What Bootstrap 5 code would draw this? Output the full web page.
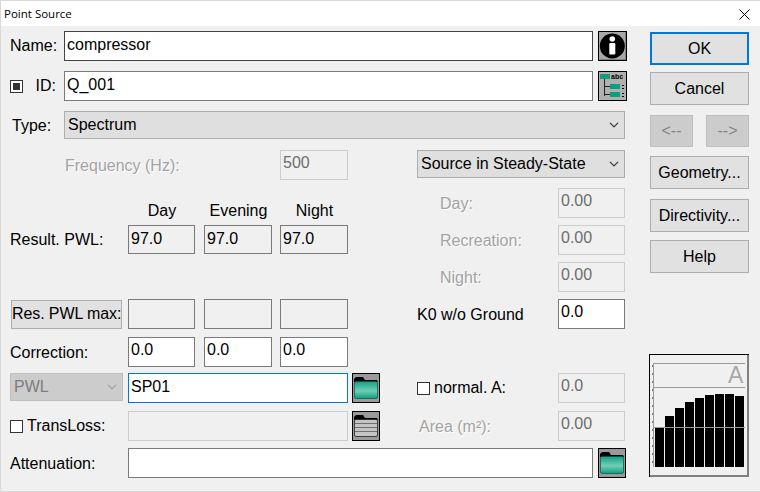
<!DOCTYPE html>
<html lang="en">
<head>
<meta charset="utf-8">
<title>Point Source</title>
<link rel="stylesheet" href="https://cdn.jsdelivr.net/npm/bootstrap@5.3.0/dist/css/bootstrap.min.css">
<style>
html,body{height:492px;overflow:hidden}
body{background:#f0f0f0;font-family:"Liberation Sans",Arial,sans-serif;font-size:16px;color:#000;line-height:20px;border-left:1px solid #d9d9d9;border-top:1px solid #d9d9d9;border-bottom:1px solid #d9d9d9}
.titlebar{height:25px;background:#fff;padding-left:3px;font-family:"Open Sans",sans-serif;font-size:11.5px;line-height:24px}
.closex{margin-right:10px;margin-top:1px}
.mainwrap{padding-left:9px}
.leftarea{width:617px}
.rightarea{width:100px;margin-left:23px;padding-top:6px}
.rw{height:30px}
.mt-31{margin-top:5px}
.mt-10{margin-top:10px}
.lbl{white-space:nowrap}
.lbl-dn{padding-top:2px}
.dis{color:#a3a3a3;text-shadow:1px 1px 0 #fff}
.fc{display:block;height:100%;padding:0 2px 4px 2px;font-size:16px;line-height:20px;border-radius:0;border:1px solid #7a7a7a;background:#fff;color:#000;box-shadow:none;font-family:inherit;min-height:0}
.fc:focus{box-shadow:none}
.fc-lo{padding-bottom:2px}
.fc-ro,.fc-ro:disabled,.fc-ro[readonly]{background:#f0f0f0;border-color:#7a7a7a;color:#000;opacity:1}
.fc-off,.fc-off:disabled{background:#f0f0f0;border:1px solid #ccc;color:#6d6d6d;opacity:1;-webkit-text-fill-color:#6d6d6d}
.fc-active{border-color:#0078d7}
.fc-dark{border-color:#444}
.sel{display:block;height:28px;padding:0 20px 0 3px;font-size:16px;line-height:20px;border-radius:0;border:1px solid #adadad;background-color:#dfdfdf;background-position:right 4px center;background-size:12px 10px;color:#000;font-family:inherit;min-height:0;box-shadow:none}
.sel:disabled{background-color:#ccc;border-color:#bfbfbf;color:#7d7d7d;opacity:1;background-image:url("data:image/svg+xml,%3csvg xmlns='http://www.w3.org/2000/svg' viewBox='0 0 16 16'%3e%3cpath fill='none' stroke='%23a0a0a0' stroke-linecap='round' stroke-linejoin='round' stroke-width='2' d='m2 5 6 6 6-6'/%3e%3c/svg%3e")}
.w-name{width:529px}
.w-a{width:67px}
.w-b{width:68px}
.w-wide{width:220px}
.icn{width:29px;height:30px;padding:0;border:0;background:none;border-radius:0;display:block;flex:none;margin-left:5px}
.icn svg{display:block}
.lbl-col{width:118px;flex:none}
.col-l{width:370px;flex:none}
.col-r{width:208px;margin-left:37px;flex:none}
.hdrs{height:20px;margin-top:21px;margin-bottom:4px;margin-left:118px}
.hdrs>div{text-align:center;padding-left:1px}
.w1{margin-left:9px}
.w2{margin-left:8px}
.btnw{display:block;border-radius:0;border:1px solid #adadad;background:#e1e1e1;color:#000;font-size:16px;line-height:20px;padding:0;height:33px;width:99px;font-family:inherit}
.btnw:hover{background:#e1e1e1;border-color:#adadad;color:#000}
.btn-main{border:2px solid #0078d7}
.btn-mini,.btn-mini:disabled{width:43px;height:32px;background:#ccc;border-color:#bfbfbf;color:#838383;opacity:1}
.mini-row{width:99px;margin-top:10px}
.btn-pwl{width:111px;height:29px;margin-left:1px;padding:0;white-space:nowrap;font-size:16px;letter-spacing:-.1px}
.chk{width:13px;height:13px;border:1px solid #333;background:#fff;flex:none;display:block}
.chk-mixed{position:relative}
.chk-mixed::after{content:"";position:absolute;left:2px;top:2px;width:7px;height:7px;background:#333}
.chart{width:101px;height:124px;margin-top:81px;margin-left:-1px;display:block}
.mt-cancel{margin-top:7px}
</style>
</head>
<body>
<div class="titlebar d-flex justify-content-between align-items-center">
  <span>Point Source</span>
  <svg class="closex" width="11" height="11" viewBox="0 0 11 11"><path d="M.5.5l10 10M10.5.5l-10 10" stroke="#000" stroke-width="1" fill="none"/></svg>
</div>
<div class="mainwrap d-flex">
  <div class="leftarea">
    <div class="rw mt-31 d-flex align-items-center">
      <div class="lbl" style="width:54px">Name:</div>
      <input class="form-control fc fc-lo fc-dark w-name" value="compressor">
      <button class="icn btn" aria-label="Info"><svg width="29" height="30" viewBox="0 0 29 30"><rect x=".5" y=".5" width="28" height="29" fill="#a8a8a8" stroke="#000"/><path d="M1 29h27V1h-1v27H1z" fill="#808080"/><circle cx="14.300" cy="15" r="12.500" fill="#000"/><circle cx="14.300" cy="8" r="2.800" fill="#fff"/><rect x="11.300" y="12" width="6" height="11.500" rx="1.200" fill="#fff"/></svg></button>
    </div>
    <div class="rw mt-10 d-flex align-items-center">
      <div class="d-flex align-items-center" style="width:54px"><span class="chk chk-mixed"></span><span class="lbl ms-auto" style="padding-right:8px">ID:</span></div>
      <input class="form-control fc fc-lo w-name" value="Q_001">
      <button class="icn btn" aria-label="Tree"><svg width="29" height="30" viewBox="0 0 29 30"><rect x=".5" y=".5" width="28" height="29" fill="#b0b0b0" stroke="#000"/><rect x="2" y="3" width="10" height="5" fill="#0f9d7f"/><text x="13" y="8" font-family="Liberation Sans" font-size="7" font-weight="bold" fill="#000">abc</text><path d="M6.500 8v17M6.500 15.500h5.500M6.500 23.500h5.500" stroke="#222" fill="none"/><rect x="12" y="13" width="10" height="5" fill="#0f9d7f"/><rect x="12" y="21" width="10" height="5" fill="#0f9d7f"/><path d="M24 14h2v1h-2zM24 17h2v1h-2zM24 22h2v1h-2zM24 25h2v1h-2z" fill="#000"/></svg></button>
    </div>
    <div class="d-flex align-items-center mt-10" style="height:28px">
      <div class="lbl lbl-dn" style="width:54px;padding-left:2px">Type:</div>
      <select class="form-select sel" style="width:561px"><option>Spectrum</option></select>
    </div>
    <div class="d-flex" style="margin-top:11px">
      <div class="col-l">
        <div class="rw d-flex align-items-center">
          <div class="lbl dis lbl-dn" style="width:270px;padding-left:55px">Frequency (Hz):</div>
          <input class="form-control fc fc-off w-b" disabled value="500">
        </div>
        <div class="hdrs d-flex">
          <div class="w-a">Day</div><div class="w-b w1">Evening</div><div class="w-b w2">Night</div>
        </div>
        <div class="d-flex align-items-center" style="height:29px">
          <div class="lbl lbl-col">Result. PWL:</div>
          <input class="form-control fc fc-lo fc-ro w-a" readonly value="97.0">
          <input class="form-control fc fc-lo fc-ro w-b w1" readonly value="97.0">
          <input class="form-control fc fc-lo fc-ro w-b w2" readonly value="97.0">
        </div>
        <div class="d-flex align-items-center" style="height:30px;margin-top:45px">
          <div class="lbl-col"><button class="btn btnw btn-pwl">Res. PWL max:</button></div>
          <input class="form-control fc fc-ro w-a" readonly>
          <input class="form-control fc fc-ro w-b w1" readonly>
          <input class="form-control fc fc-ro w-b w2" readonly>
        </div>
        <div class="rw d-flex align-items-center" style="margin-top:8px">
          <div class="lbl lbl-col lbl-dn">Correction:</div>
          <input class="form-control fc w-a" value="0.0">
          <input class="form-control fc w-b w1" value="0.0">
          <input class="form-control fc w-b w2" value="0.0">
        </div>
        <div class="rw d-flex" style="margin-top:6px">
          <div class="lbl-col"><select class="form-select sel" disabled style="width:113px"><option>PWL</option></select></div>
          <input class="form-control fc fc-lo fc-active w-wide" value="SP01">
          <button class="icn btn" style="margin-left:4px;width:28px" aria-label="Open"><svg width="28" height="30" viewBox="0 0 28 30"><use href="#fold"/></svg></button>
        </div>
        <div class="rw d-flex align-items-center" style="margin-top:8px">
          <div class="lbl-col d-flex align-items-center"><span class="chk"></span><span class="lbl ms-1">TransLoss:</span></div>
          <input class="form-control fc fc-off w-wide" disabled>
          <button class="icn btn" style="margin-left:4px;width:28px" aria-label="Open"><svg width="28" height="30" viewBox="0 0 28 30"><use href="#foldgrey"/></svg></button>
        </div>
      </div>
      <div class="col-r">
        <select class="form-select sel" style="width:208px"><option>Source in Steady-State</option></select>
        <div class="rw d-flex align-items-center justify-content-between" style="margin-top:10px">
          <div class="lbl dis lbl-dn" style="padding-left:23px">Day:</div>
          <input class="form-control fc fc-off w-a" disabled value="0.00">
        </div>
        <div class="rw d-flex align-items-center justify-content-between" style="margin-top:7px">
          <div class="lbl dis lbl-dn" style="padding-left:23px">Recreation:</div>
          <input class="form-control fc fc-off w-a" disabled value="0.00">
        </div>
        <div class="rw d-flex align-items-center justify-content-between" style="margin-top:7px">
          <div class="lbl dis lbl-dn" style="padding-left:23px">Night:</div>
          <input class="form-control fc fc-off w-a" disabled value="0.00">
        </div>
        <div class="rw d-flex align-items-center justify-content-between" style="margin-top:7px">
          <div class="lbl lbl-dn">K0 w/o Ground</div>
          <input class="form-control fc w-a" value="0.0">
        </div>
        <div class="rw d-flex align-items-center justify-content-between" style="margin-top:44px">
          <div class="d-flex align-items-center"><span class="chk"></span><span class="lbl ms-1">normal. A:</span></div>
          <input class="form-control fc fc-off w-a" disabled value="0.0">
        </div>
        <div class="rw d-flex align-items-center justify-content-between" style="margin-top:8px">
          <div class="lbl dis lbl-dn" style="padding-left:2px">Area (m²):</div>
          <input class="form-control fc fc-off w-a" disabled value="0.00">
        </div>
      </div>
    </div>
    <div class="rw d-flex align-items-center" style="margin-top:7px">
      <div class="lbl lbl-col lbl-dn">Attenuation:</div>
      <input class="form-control fc" style="width:465px" >
      <button class="icn btn" style="margin-left:5px;width:28px" aria-label="Open"><svg width="28" height="30" viewBox="0 0 28 30"><use href="#fold"/></svg></button>
    </div>
  </div>
  <div class="rightarea">
    <button class="btn btnw btn-main">OK</button>
    <button class="btn btnw mt-cancel">Cancel</button>
    <div class="d-flex justify-content-between mini-row">
      <button class="btn btnw btn-mini" disabled>&lt;--</button>
      <button class="btn btnw btn-mini" disabled>--&gt;</button>
    </div>
    <button class="btn btnw" style="margin-top:9px">Geometry...</button>
    <button class="btn btnw" style="margin-top:10px">Directivity...</button>
    <button class="btn btnw" style="margin-top:8px">Help</button>
    <svg class="chart" viewBox="0 0 101 124" aria-label="Spectrum chart">
      <rect x=".5" y=".5" width="99" height="122" fill="#f0f0f0" stroke="#000"/>
      <path d="M100 1v122H1v-2h97V1z" fill="#808080"/>
      <path d="M4.500 9v104" stroke="#9a9a9a" fill="none"/>
      <path d="M3 12h1M3 20h1M3 28h1M3 36h1M3 44h1M3 52h1M3 60h1M3 68h1M3 76h1M3 84h1M3 92h1M3 100h1M3 108h1" stroke="#000" fill="none"/>
      <path d="M4 9.500h92M4 33.500h92" stroke="#9a9a9a" fill="none"/>
      <rect x="6" y="73" width="9" height="40"/><rect x="16" y="62" width="9" height="51"/><rect x="26" y="54" width="9" height="59"/><rect x="36" y="48" width="9" height="65"/><rect x="46" y="44" width="9" height="69"/><rect x="56" y="41" width="9" height="72"/><rect x="66" y="40" width="9" height="73"/><rect x="76" y="40" width="9" height="73"/><rect x="86" y="42" width="9" height="71"/>
      <path d="M4 73.500h92" stroke="#9a9a9a" fill="none"/>
      <text x="79" y="29" font-family="Liberation Sans" font-size="23" fill="#a8a8a8">A</text>
    </svg>
  </div>
</div>
<svg width="0" height="0" class="position-absolute"><defs>
<linearGradient id="gt" x1="0" y1="0" x2="0" y2="1"><stop offset="0" stop-color="#16a083"/><stop offset=".55" stop-color="#6fcfb4"/><stop offset="1" stop-color="#0f9d7f"/></linearGradient>
<g id="fold"><rect x=".5" y=".5" width="27" height="29" fill="#9a9a9a" stroke="#000"/><path d="M2 9V6l2-2h7l2 3h12l1 2z" fill="#000"/><rect x="2.500" y="8.500" width="23" height="17" rx="1.500" fill="url(#gt)" stroke="#055" stroke-width=".7"/></g>
<g id="foldgrey"><rect x=".5" y=".5" width="27" height="29" fill="#9a9a9a" stroke="#000"/><path d="M2 9V6l2-2h7l2 3h12l1 2z" fill="#000"/><rect x="2.500" y="8.500" width="23" height="17" rx="1.500" fill="#c4c4c4" stroke="#222" stroke-width=".8"/><path d="M3 12.500h22M3 16.500h22M3 20.500h22" stroke="#707070" fill="none"/></g>
</defs></svg>
<script src="https://cdn.jsdelivr.net/npm/bootstrap@5.3.0/dist/js/bootstrap.bundle.min.js"></script>
</body>
</html>
